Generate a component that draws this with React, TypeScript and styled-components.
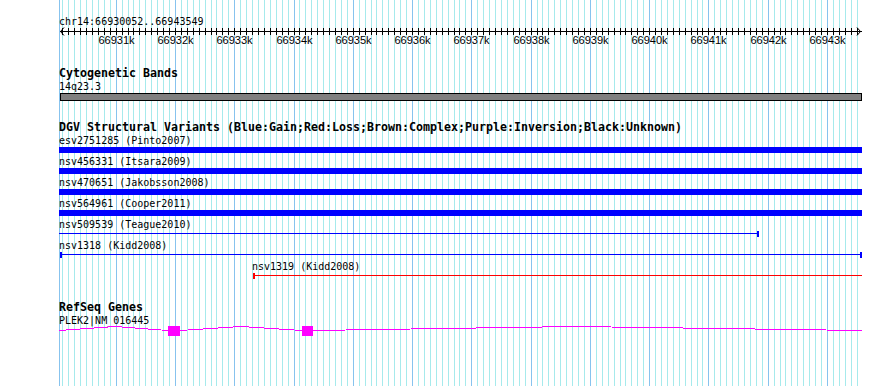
import React from "react";
import styled, { createGlobalStyle } from "styled-components";

const START = 66930052;
const END = 66943549;
const LEFT = 60;
const SPAN = 800;
const WIDTH = 890;
const HEIGHT = 386;

const px = (pos: number) =>
  Math.floor(LEFT + ((pos - START) * SPAN) / (END - START));

const stops: number[] = [];
for (let p = Math.ceil(START / 100) * 100; p <= END; p += 100) stops.push(p);

const majors = stops.filter((p) => p % 1000 === 0);

interface Variant {
  label: string;
  kind: "bar" | "line";
  x1: number;
  x2: number;
  color: string;
  capStart?: boolean;
  capEnd?: boolean;
  indent?: number;
}

const variants: Variant[] = [
  { label: "esv2751285 (Pinto2007)", kind: "bar", x1: 59, x2: 862, color: "#0000ff" },
  { label: "nsv456331 (Itsara2009)", kind: "bar", x1: 59, x2: 862, color: "#0000ff" },
  { label: "nsv470651 (Jakobsson2008)", kind: "bar", x1: 59, x2: 862, color: "#0000ff" },
  { label: "nsv564961 (Cooper2011)", kind: "bar", x1: 59, x2: 862, color: "#0000ff" },
  { label: "nsv509539 (Teague2010)", kind: "line", x1: 59, x2: 759, color: "#0000ff", capEnd: true },
  { label: "nsv1318 (Kidd2008)", kind: "line", x1: 60, x2: 862, color: "#0000ff", capStart: true, capEnd: true },
  { label: "nsv1319 (Kidd2008)", kind: "line", x1: 253, x2: 862, color: "#ff0000", capStart: true, indent: 193 },
];

const GlobalStyle = createGlobalStyle`
  html, body {
    margin: 0;
    padding: 0;
    background: #ffffff;
  }
`;

const Panel = styled.div`
  position: relative;
  width: ${WIDTH}px;
  height: ${HEIGHT}px;
  overflow: hidden;
  background: #ffffff;
`;

const GridLayer = styled.svg`
  position: absolute;
  top: 0;
  left: 0;
  z-index: 0;
`;

const Tracks = styled.div`
  position: relative;
  z-index: 1;
  display: flex;
  flex-direction: column;
`;

const Section = styled.section<{ $top: number }>`
  display: flex;
  flex-direction: column;
  margin-top: ${(p) => p.$top}px;
`;

const Title = styled.div`
  height: 16px;
  line-height: 16px;
  padding-left: 59px;
  font-family: "DejaVu Sans Mono", "Liberation Mono", monospace;
  font-size: 11.63px;
  font-weight: bold;
  color: #000000;
  white-space: pre;
`;

const Label = styled.div<{ $h: number; $indent?: number }>`
  height: ${(p) => p.$h}px;
  line-height: ${(p) => p.$h}px;
  padding-left: ${(p) => 59 + (p.$indent ?? 0)}px;
  font-family: "DejaVu Sans Mono", "Liberation Mono", monospace;
  font-size: 10px;
  color: #000000;
  white-space: pre;
`;

const Glyph = styled.svg`
  display: block;
  flex: none;
`;

const Grid = () => (
  <GridLayer width={WIDTH} height={HEIGHT}>
    <line x1={59.5} y1={0} x2={59.5} y2={HEIGHT} stroke="#87c3ee" />
    {stops.map((p) => (
      <line
        key={p}
        x1={px(p) + 0.5}
        y1={0}
        x2={px(p) + 0.5}
        y2={HEIGHT}
        stroke={p % 1000 === 0 ? "#87c3ee" : "#a6eaec"}
      />
    ))}
  </GridLayer>
);

const Ruler = () => (
  <Glyph width={WIDTH} height={20} shapeRendering="crispEdges">
    <line x1={60} y1={4.5} x2={862} y2={4.5} stroke="#000" />
    <polyline points="64,0.5 60.5,4.5 64,8.5" fill="none" stroke="#000" shapeRendering="auto" />
    <polyline points="857,0.5 860.5,4.5 857,8.5" fill="none" stroke="#000" shapeRendering="auto" />
    {stops.map((p) => (
      <line key={p} x1={px(p) + 0.5} y1={1} x2={px(p) + 0.5} y2={8} stroke="#000" />
    ))}
    {majors.map((p) => (
      <text
        key={p}
        x={px(p) + 0.5}
        y={17}
        textAnchor="middle"
        fontFamily="'Liberation Sans', Arial, sans-serif"
        fontSize={11}
        fill="#000"
      >
        {`${p / 1000}k`}
      </text>
    ))}
  </Glyph>
);

const VariantGlyph = ({ v }: { v: Variant }) => (
  <Glyph width={WIDTH} height={9} shapeRendering="crispEdges">
    {v.kind === "bar" ? (
      <rect x={v.x1} y={0} width={v.x2 - v.x1} height={6} fill={v.color} />
    ) : (
      <>
        <rect x={v.x1} y={2} width={v.x2 - v.x1} height={1} fill={v.color} />
        {v.capStart && <rect x={v.x1} y={0} width={2} height={6} fill={v.color} />}
        {v.capEnd && <rect x={v.x2 - 2} y={0} width={2} height={6} fill={v.color} />}
      </>
    )}
  </Glyph>
);

const GeneGlyph = () => (
  <Glyph width={WIDTH} height={12} shapeRendering="crispEdges">
    <polyline points="59,4.5 115,0.5 168,4.5" fill="none" stroke="#ff00ff" />
    <polyline points="180,4.5 241,0.5 302,4.5" fill="none" stroke="#ff00ff" />
    <polyline points="313,4.5 575,0.5 862,4.5" fill="none" stroke="#ff00ff" />
    <rect x={168} y={0} width={12} height={10} fill="#ff00ff" />
    <rect x={302} y={0} width={11} height={10} fill="#ff00ff" />
  </Glyph>
);

export default function App() {
  return (
    <>
      <GlobalStyle />
      <Panel>
        <Grid />
        <Tracks>
          <Section $top={16}>
            <Label $h={11}>chr14:66930052..66943549</Label>
            <Ruler />
          </Section>

          <Section $top={18}>
            <Title>Cytogenetic Bands</Title>
            <Label $h={11}>14q23.3</Label>
            <Glyph width={WIDTH} height={9} shapeRendering="crispEdges">
              <rect x={60.5} y={1.5} width={801} height={7} fill="#808080" stroke="#000" />
            </Glyph>
          </Section>

          <Section $top={18}>
            <Title>DGV Structural Variants (Blue:Gain;Red:Loss;Brown:Complex;Purple:Inversion;Black:Unknown)</Title>
            {variants.map((v) => (
              <React.Fragment key={v.label}>
                <Label $h={12} $indent={v.indent}>{v.label}</Label>
                <VariantGlyph v={v} />
              </React.Fragment>
            ))}
          </Section>

          <Section $top={17}>
            <Title>RefSeq Genes</Title>
            <Label $h={11}>PLEK2|NM_016445</Label>
            <GeneGlyph />
          </Section>
        </Tracks>
      </Panel>
    </>
  );
}
